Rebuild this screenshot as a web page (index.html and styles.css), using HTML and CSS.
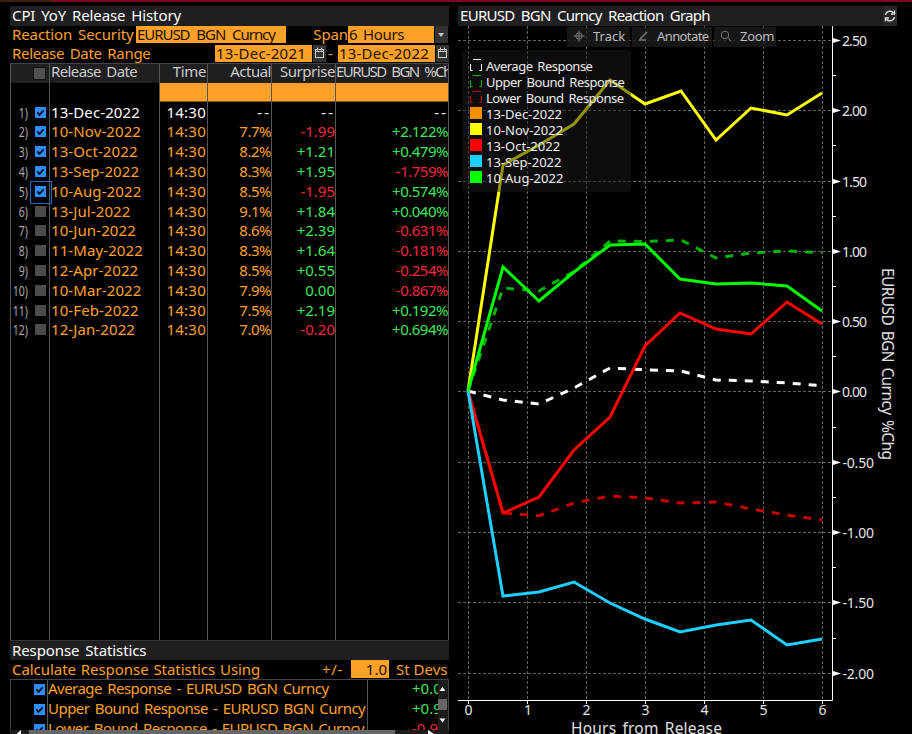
FILE: index.html
```html
<!DOCTYPE html>
<html lang="en">
<head>
<meta charset="utf-8">
<title>CPI YoY Release History</title>
<link rel="stylesheet" href="styles.css">
</head>
<body>
<svg class="defs" width="0" height="0" aria-hidden="true">
  <symbol id="cal" viewBox="0 0 13 17"><rect x="2.500" y="4.500" width="8" height="8" fill="none" stroke="#ccc"/><path d="M2 6.500h9M4.500 2.500v3M8.500 2.500v3" stroke="#ccc" fill="none"/></symbol>
  <symbol id="tick" viewBox="0 0 11 11"><path d="M2.300 5.300l2.200 2.500L8.700 3.400" stroke="#06101c" stroke-width="1.900" fill="none"/></symbol>
</svg>
<div class="topline"></div>
<div class="main">
  <section class="left">
    <h2 class="bar">CPI YoY Release History</h2>
    <div class="form-row">
      <span class="label security">Reaction Security</span>
      <span class="field security-field">EURUSD BGN Curncy</span>
      <span class="label span-label">Span</span>
      <span class="field span-field">6 Hours</span>
      <span class="btn drop"></span>
    </div>
    <div class="form-row dates">
      <span class="label range">Release Date Range</span>
      <span class="field date-field">13-Dec-2021</span>
      <span class="btn"><svg width="13" height="17"><use href="#cal"/></svg></span>
      <span class="label dash">-</span>
      <span class="field date-field">13-Dec-2022</span>
      <span class="btn"><svg width="13" height="17"><use href="#cal"/></svg></span>
    </div>
    <div class="table">
      <div class="tr head"><div class="sel"><i class="box big"></i></div><div>Release Date</div><div>Time</div><div>Actual</div><div>Surprise</div><div class="chg">EURUSD BGN %Chg</div></div>
      <div class="tr filter"><div></div><div></div><div></div><div></div><div></div><div></div></div>
      <div class="tr now"><div class="sel"><b>1)</b><i class="box on"><svg><use href="#tick"/></svg></i></div><div>13-Dec-2022</div><div>14:30</div><div class="na">--</div><div class="na">--</div><div class="na">--</div></div>
      <div class="tr"><div class="sel"><b>2)</b><i class="box on"><svg><use href="#tick"/></svg></i></div><div>10-Nov-2022</div><div>14:30</div><div>7.7%</div><div class="dn">-1.99</div><div class="up">+2.122%</div></div>
      <div class="tr"><div class="sel"><b>3)</b><i class="box on"><svg><use href="#tick"/></svg></i></div><div>13-Oct-2022</div><div>14:30</div><div>8.2%</div><div class="up">+1.21</div><div class="up">+0.479%</div></div>
      <div class="tr"><div class="sel"><b>4)</b><i class="box on"><svg><use href="#tick"/></svg></i></div><div>13-Sep-2022</div><div>14:30</div><div>8.3%</div><div class="up">+1.95</div><div class="dn">-1.759%</div></div>
      <div class="tr"><div class="sel focus"><b>5)</b><i class="box on"><svg><use href="#tick"/></svg></i></div><div>10-Aug-2022</div><div>14:30</div><div>8.5%</div><div class="dn">-1.95</div><div class="up">+0.574%</div></div>
      <div class="tr"><div class="sel"><b>6)</b><i class="box"></i></div><div>13-Jul-2022</div><div>14:30</div><div>9.1%</div><div class="up">+1.84</div><div class="up">+0.040%</div></div>
      <div class="tr"><div class="sel"><b>7)</b><i class="box"></i></div><div>10-Jun-2022</div><div>14:30</div><div>8.6%</div><div class="up">+2.39</div><div class="dn">-0.631%</div></div>
      <div class="tr"><div class="sel"><b>8)</b><i class="box"></i></div><div>11-May-2022</div><div>14:30</div><div>8.3%</div><div class="up">+1.64</div><div class="dn">-0.181%</div></div>
      <div class="tr"><div class="sel"><b>9)</b><i class="box"></i></div><div>12-Apr-2022</div><div>14:30</div><div>8.5%</div><div class="up">+0.55</div><div class="dn">-0.254%</div></div>
      <div class="tr"><div class="sel"><b>10)</b><i class="box"></i></div><div>10-Mar-2022</div><div>14:30</div><div>7.9%</div><div class="up">0.00</div><div class="dn">-0.867%</div></div>
      <div class="tr"><div class="sel"><b>11)</b><i class="box"></i></div><div>10-Feb-2022</div><div>14:30</div><div>7.5%</div><div class="up">+2.19</div><div class="up">+0.192%</div></div>
      <div class="tr"><div class="sel"><b>12)</b><i class="box"></i></div><div>12-Jan-2022</div><div>14:30</div><div>7.0%</div><div class="dn">-0.20</div><div class="up">+0.694%</div></div>
      <div class="tr fill"><div></div><div></div><div></div><div></div><div></div><div></div></div>
    </div>
    <h2 class="bar stat-bar">Response Statistics</h2>
    <div class="calc">
      <span class="calc-label">Calculate Response Statistics Using</span>
      <span class="pm">+/-</span>
      <span class="field dev">1.0</span>
      <span class="devs">St Devs</span>
    </div>
    <div class="stats">
      <div class="stat-list">
        <div class="st"><div class="sel"><i class="box on"><svg><use href="#tick"/></svg></i></div><div>Average Response - EURUSD BGN Curncy</div><div class="up">+0.040%</div></div>
        <div class="st"><div class="sel"><i class="box on"><svg><use href="#tick"/></svg></i></div><div>Upper Bound Response - EURUSD BGN Curncy</div><div class="up">+0.989%</div></div>
        <div class="st"><div class="sel"><i class="box on"><svg><use href="#tick"/></svg></i></div><div>Lower Bound Response - EURUSD BGN Curncy</div><div class="dn">-0.909%</div></div>
      </div>
      <svg class="vscroll" width="10" height="50"><rect width="10" height="50" fill="#1c1c1c"/><path d="M1.500 11l3-4 3 4zM1.500 38.500h6l-3 4z" fill="#fff"/><rect y="19" width="9" height="11" fill="#666"/></svg>
    </div>
    <div class="hscroll"><svg width="19" height="4"><path d="M11 0v4H6.500z" fill="#fff"/></svg><span class="thumb"></span><svg width="54" height="4"><path d="M33 0l6 4h-6z" fill="#fff"/></svg></div>
  </section>
  <section class="right">
    <h2 class="bar"><span>EURUSD BGN Curncy Reaction Graph</span>
      <svg class="refresh" width="14" height="20" viewBox="0 0 14 20"><rect width="14" height="20" fill="#282828"/><g fill="none" stroke="#ddd" stroke-width="1.400"><path d="M2.500 9a4.600 4.600 0 0 1 8-2.200M11.500 11a4.600 4.600 0 0 1-8 2.200"/><path d="M11.500 4.500v3.500H8M2.500 15.500V12H6"/></g></svg>
    </h2>
    <div class="chart">
      <svg class="plot" width="454" height="708" viewBox="458 26 454 708">
        <g class="grid">
          <path d="M458 40.500H832M458 110.500H832M458 181.500H832M458 251.500H832M458 321.500H832M458 391.500H832M458 462.500H832M458 532.500H832M458 602.500H832M458 673.500H832"/>
          <path d="M468.500 26V700M527.500 26V700M586.500 26V700M645.500 26V700M704.500 26V700M763.500 26V700M822.500 26V700"/>
        </g>
        <g class="lines">
          <polyline class="dashed" stroke="#fff" points="468,391 503,400 539,404 574,388 610,368 645,369.700 681,371 716,380 751,381 787,383 822,385.700"/>
          <polyline class="dashed" stroke="#00b400" points="468,391 503,288 539,291 574,271.500 610,241 645,241.500 681,240 716,258 751,253 787,251 822,252.700"/>
          <polyline class="dashed" stroke="#c80000" points="468,391 503,513 539,515.700 574,503 610,496 645,498 681,503 716,502 751,509 787,515 822,520"/>
          <polyline stroke="#ff0" points="468,391 503,165 539,145 574,124 610,80 645,104 681,91 716,140 751,108 787,115 822,93"/>
          <polyline stroke="#f00" points="468,391 503,513 539,497 574,450 610,417 645,346 680,313 716,329 751,334 787,302 822,324"/>
          <polyline stroke="#1ecfff" points="468,391 503,596 539,592 574,582 610,603 645,619 680,632 716,625 751,620 787,645 822,639"/>
          <polyline stroke="#0f0" points="468,391 503,267 539,301 574,272 610,245 645,244 680,279 716,284 751,283 787,286 822,311"/>
        </g>
        <path class="axis" d="M832.500 26V700.500H458M468.500 700v4M527.500 700v4M586.500 700v4M645.500 700v4M704.500 700v4M763.500 700v4M822.500 700v4M832 75.500h4M832 145.500h4M832 216.500h4M832 286.500h4M832 356.500h4M832 427.500h4M832 497.500h4M832 567.500h4M832 638.500h4"/>
        <path fill="#fff" d="M833 38l8 2.500-8 2.500zM833 108l8 2.500-8 2.500zM833 179l8 2.500-8 2.500zM833 249l8 2.500-8 2.500zM833 319l8 2.500-8 2.500zM833 389l8 2.500-8 2.500zM833 460l8 2.500-8 2.500zM833 530l8 2.500-8 2.500zM833 600l8 2.500-8 2.500zM833 671l8 2.500-8 2.500z"/>
        <g class="ticks">
          <text x="842" y="46" textLength="25">2.50</text><text x="842" y="116" textLength="25">2.00</text><text x="842" y="187" textLength="25">1.50</text><text x="842" y="257" textLength="25">1.00</text><text x="842" y="327" textLength="25">0.50</text><text x="842" y="397" textLength="25">0.00</text><text x="842.500" y="468" textLength="31.500">-0.50</text><text x="842.500" y="538" textLength="31.500">-1.00</text><text x="842.500" y="608" textLength="31.500">-1.50</text><text x="842.500" y="679" textLength="31.500">-2.00</text>
        </g>
        <g class="ticks mid">
          <text x="468.500" y="715">0</text><text x="528" y="715">1</text><text x="586.500" y="715">2</text><text x="645.500" y="715">3</text><text x="704.500" y="715">4</text><text x="763.500" y="715">5</text><text x="822.500" y="715">6</text>
        </g>
        <text class="title" x="571" y="734" textLength="151">Hours from Release</text>
        <text class="title" transform="translate(882 268) rotate(90)" textLength="192">EURUSD BGN Curncy %Chg</text>
      </svg>
      <div class="tools">
        <span class="tool"><svg width="12" height="14" viewBox="0 0 12 14"><circle cx="6" cy="7" r="3.200"/><path d="M6 1.500v11M.5 7h11"/></svg>Track</span>
        <span class="tool annotate"><svg width="12" height="14" viewBox="0 0 12 14"><path d="M2 11h7M3 10l7-7" stroke-width="1.600"/></svg>Annotate</span>
        <span class="tool zoom"><svg width="12" height="14" viewBox="0 0 12 14"><circle cx="5" cy="6" r="3.800"/><path d="M8 9l3.500 3.500"/></svg>Zoom</span>
      </div>
      <div class="legend">
        <div class="stat"><svg class="white" width="12" height="12"><path d="M3 .5h8M.5 5v6.500h2M11.500 5v6.500h-2"/></svg>Average Response</div>
        <div class="stat"><svg class="green" width="12" height="12"><path d="M3 .5h8M.5 5v6.500h2M11.500 5v6.500h-2"/></svg>Upper Bound Response</div>
        <div class="stat"><svg class="red" width="12" height="12"><path d="M3 .5h8M.5 5v6.500h2M11.500 5v6.500h-2"/></svg>Lower Bound Response</div>
        <div><i class="c-orange"></i>13-Dec-2022</div>
        <div><i class="c-yellow"></i>10-Nov-2022</div>
        <div><i class="c-red"></i>13-Oct-2022</div>
        <div><i class="c-blue"></i>13-Sep-2022</div>
        <div><i class="c-green"></i>10-Aug-2022</div>
      </div>
    </div>
  </section>
</div>
</body>
</html>
```
FILE: styles.css
```css
* { box-sizing: border-box; }
body {
  margin: 0; width: 912px; height: 734px; overflow: hidden;
  background: #000; color: #ffa028;
  font: 15px/20px "Noto Sans", sans-serif;
  white-space: nowrap;
}
.defs { position: absolute; }
.topline { height: 2px; margin-bottom: 4px; background: linear-gradient(90deg, #3c200f 51px, #7d0d1c 51px); }
.main { display: flex; height: 728px; }
.left { width: 439px; margin-left: 10px; display: flex; flex-direction: column; overflow: hidden; }
.right { width: 454px; margin-left: 9px; }
.bar {
  margin: 0; height: 20px; flex: none; padding-left: 2px;
  background: #1f1f1f; color: #fff; font-size: 15px; font-weight: 400; line-height: 19px; letter-spacing: -.1px; word-spacing: 2px;
}
.right .bar { width: 439px; display: flex; justify-content: space-between; letter-spacing: -.7px; word-spacing: 3px; }

.form-row { display: flex; align-items: flex-start; height: 19px; flex: none; line-height: 17px; letter-spacing: -.1px; word-spacing: 2px; }
.dates { height: 18px; }
.label { padding-left: 2px; flex: none; }
.security { width: 126px; }
.field { background: #ffa028; color: #201400; height: 17px; padding-left: 2px; flex: none; }
.security-field { width: 150px; padding-left: 1px; letter-spacing: -1.05px; word-spacing: 4px; }
.span-label { width: 62px; text-align: right; padding: 0; }
.span-field { width: 86px; padding-left: 1px; letter-spacing: -.3px; }
.btn { width: 13px; height: 17px; margin-left: 1px; background: #333; flex: none; display: flex; }
.drop::before { content: ""; margin: 7px 3px; border: 3px solid transparent; border-top: 4px solid #ccc; border-bottom: 0; width: 0; height: 0; }
.range { width: 205px; letter-spacing: -.3px; }
.date-field { width: 97px; }
.dash { width: 10px; }
.dates .date-field { letter-spacing: .2px; padding-left: 1px; }
.dates .dash + .date-field { margin-left: 2px; }

.table { height: 577px; flex: none; border-top: 1px solid #444; display: flex; flex-direction: column; border-right: 1px solid #555; }
.tr { display: grid; grid-template-columns: 39px 110px 48px 64px 64px 113px; height: 19.82px; flex: none; line-height: 17px; }
.tr > div { border-left: 1px solid #555; text-align: right; overflow: hidden; }
.tr > div:nth-child(2) { text-align: left; padding-left: 1px; letter-spacing: .1px; }
.tr > div:nth-child(3) { padding-right: 1px; letter-spacing: .25px; }
.tr > div:nth-child(4), .tr > div:nth-child(6) { letter-spacing: -.5px; }
.tr.head { height: 19px; background: #1f1f1f; color: #ccc; line-height: 15px; }
.head > div:nth-child(2) { letter-spacing: -.6px; word-spacing: 2px; }
.head > div:nth-child(3) { letter-spacing: -.35px; }
.head > div:nth-child(5) { letter-spacing: -.45px; }
.tr.head > .chg { text-align: left; letter-spacing: -1.5px; word-spacing: 3px; }
.tr.filter { height: 20.500px; }
.filter div:nth-child(n+3) { background: linear-gradient(#ffa028 18px, #865416 18px 19px, #000 19px); }
.now { color: #fff; }
.tr > div.na { letter-spacing: 2px; }
.up { color: #3ee65c; }
.dn { color: #f5253c; }
.sel { display: flex; align-items: flex-start; }
.sel b { width: 17px; font-weight: 400; color: #aaa; font-size: 14px; display: flex; justify-content: flex-end; transform: scaleX(.75); transform-origin: right; }
.box { width: 11px; height: 11px; margin: 3px 0 0 7px; background: #4c4c4c; flex: none; }
.box svg { width: 11px; height: 11px; display: block; }
.on { background: #2d8fff; }
.big { width: 13px; height: 13px; margin: 3px 0 0 22px; background: #505050; border: 1px solid #111; }
.tr > .focus { position: relative; overflow: visible; }
.focus::after { content: ""; position: absolute; left: 19px; top: -2px; width: 20px; height: 21px; border: 1px solid #1c6cc4; }
.tr.fill { flex: 1; height: auto; }

.stat-bar { border-top: 1px solid #333; line-height: 18px; }
.calc { display: flex; height: 19px; flex: none; line-height: 18px; padding-left: 2px; }
.calc-label { width: 310px; letter-spacing: -.05px; word-spacing: 1px; }
.pm { width: 29px; letter-spacing: .7px; }
.dev { width: 38px; text-align: right; padding-right: 2px; height: 18px; }
.devs { margin-left: 7px; }
.stats { display: flex; height: 51px; flex: none; border: solid #444; border-width: 1px 1px 0 1px; overflow: hidden; }
.stat-list { width: 427px; flex: none; overflow: hidden; }
.st { display: grid; grid-template-columns: 36px 321px 70px; height: 20px; line-height: 17px; }
.st > div:nth-child(2) { border-left: 1px solid #555; border-right: 1px solid #555; padding-left: 0; letter-spacing: -.53px; word-spacing: 1.900px; }
.st > div:last-child { text-align: left; padding-left: 44px; }
.st .box { margin: 4px 0 0 23px; }
.vscroll { flex: none; }
.hscroll { height: 4px; background: #1c1c1c; display: flex; }
.thumb { width: 366px; background: #666; }

.chart { position: relative; height: 708px; }
.plot { display: block; }
.grid path { stroke: #626262; stroke-dasharray: 3 2; fill: none; }
.lines { fill: none; stroke-width: 3; }
.dashed { stroke-dasharray: 8 8; }
.axis { stroke: #fff; fill: none; }
.ticks { font-size: 14px; fill: #e6e6e6; }
.mid { text-anchor: middle; }
.title { font-size: 15.500px; fill: #e0e0e0; word-spacing: 2px; }
.tools { position: absolute; left: 109px; top: 1px; display: flex; gap: 2px; color: #bdbdbd; font-size: 13px; line-height: 19px; }
.tool { display: flex; align-items: center; width: 63px; height: 20px; padding: 0 0 2px 6px; background: rgba(28, 28, 28, .8); }
.tool svg { margin-right: 8px; fill: none; stroke: #777; flex: none; }
.annotate { width: 80px; letter-spacing: -.6px; }
.annotate svg { margin-left: -1px; }
.zoom { width: 62px; letter-spacing: -.3px; }
.legend { position: absolute; left: 4px; top: 24px; width: 169px; height: 142px; padding: 8px; border-radius: 3px; background: rgba(28, 28, 28, .48); color: #eee; font-size: 13px; }
.legend div { display: flex; align-items: center; height: 16px; line-height: 16px; }
.legend .stat { letter-spacing: -.5px; word-spacing: 2px; }
.legend i, .legend svg { width: 12px; height: 12px; margin: 0 4px 2px 0; flex: none; fill: none; }
.white { stroke: #fff; } .green { stroke: #00b400; } .red { stroke: #c80000; }
.c-orange { background: #f59000; } .c-yellow { background: #ff0; } .c-red { background: #f00; } .c-blue { background: #1ecfff; } .c-green { background: #0f0; }
```
